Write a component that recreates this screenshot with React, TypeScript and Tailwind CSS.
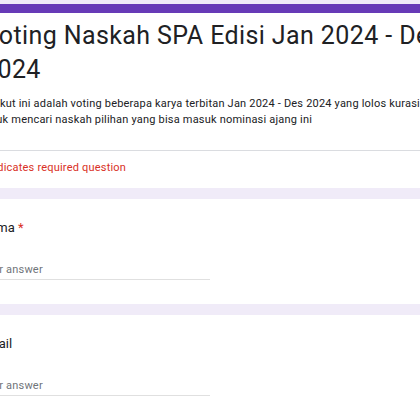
export default function App() {
  return (
    <div className="w-[420px] h-[420px] overflow-hidden bg-[#f0ebf8] pt-[4px] font-['Roboto',sans-serif]">
      <div className="-ml-[37px] w-[680px] flex flex-col gap-[11px]">
        <div className="bg-white rounded-t-lg border-t-[9px] border-[#673ab7]">
          <div className="px-[20px] pt-[6px] pb-[22px]">
            <h1 className="max-w-[470px] text-[25px] leading-[34px] tracking-[0.4px] text-[#202124]">
              Voting Naskah SPA Edisi Jan 2024 - Des 2024
            </h1>
            <p className="mt-[9px] ml-[-3px] text-[11px] leading-[16px] tracking-[0.2px] text-[#202124]">
              Berikut ini adalah voting beberapa karya terbitan Jan 2024 - Des 2024 yang lolos kurasi
              <br />
              untuk mencari naskah pilihan yang bisa masuk nominasi ajang ini
            </p>
          </div>
          <div className="border-t border-[#dadce0] px-[17px] pt-[9px] pb-[12px]">
            <p className="text-[11px] leading-[16px] tracking-[0.2px] text-[#d93025]">* Indicates required question</p>
          </div>
        </div>

        <div className="bg-white px-[17px] pt-[20px] pb-[24px]">
          <p className="text-[13px] leading-[18px] text-[#202124]">
            Nama <span className="text-[#d93025]">*</span>
          </p>
          <div className="mt-[25px] w-[230px] border-b border-[#e0e0e0] pb-[1px] text-[11px] leading-[16px] tracking-[0.2px] text-[#70757a]">
            Your answer
          </div>
        </div>

        <div className="bg-white px-[17px] pt-[20px] pb-[24px]">
          <p className="text-[13px] leading-[18px] text-[#202124]">Email</p>
          <div className="mt-[25px] w-[230px] border-b border-[#e0e0e0] pb-[1px] text-[11px] leading-[16px] tracking-[0.2px] text-[#70757a]">
            Your answer
          </div>
        </div>
      </div>
    </div>
  );
}
